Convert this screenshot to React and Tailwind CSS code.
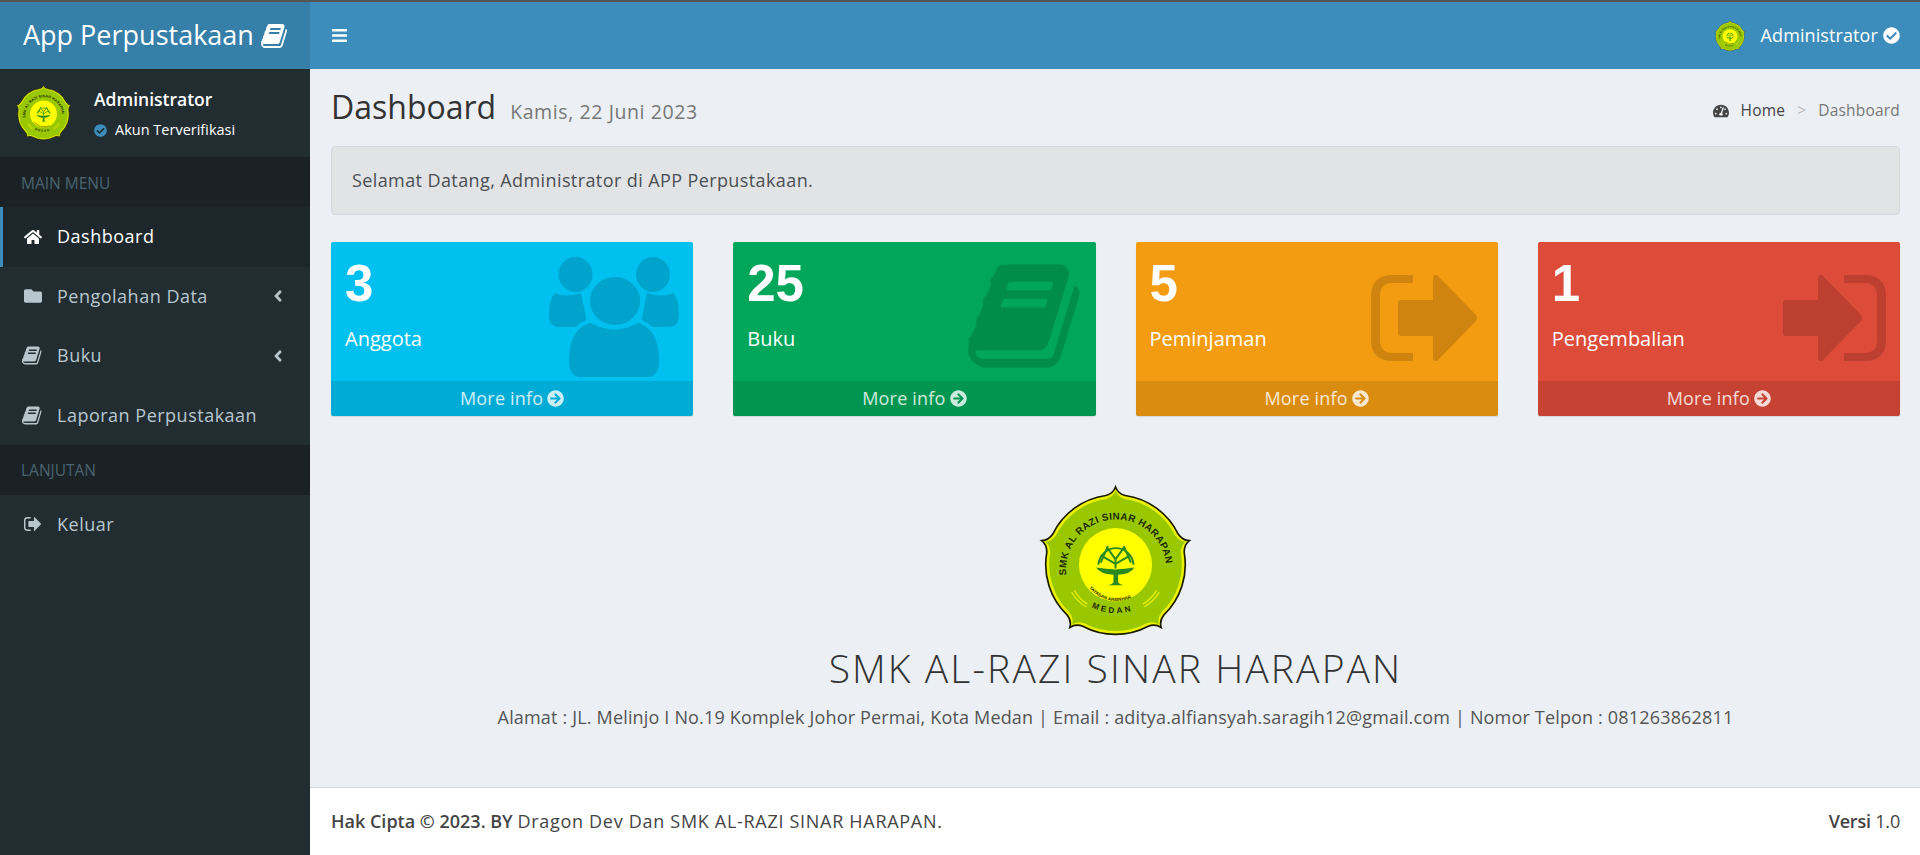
import { FaBars, FaHome, FaFolder, FaAngleLeft, FaCheckCircle, FaArrowCircleRight, FaTachometerAlt } from 'react-icons/fa';

const bookPath = "M1639 478q40 57 18 129l-275 906q-19 64-76.5 107.5t-122.5 43.5h-923q-77 0-148.5-53.5t-99.5-131.5q-24-67-2-127 0-4 3-27t4-37q1-8-3-21.5t-3-19.5q2-11 8-21t16.5-23.5 16.5-23.5q23-38 45-91.5t30-91.5q3-10 .5-30t-.5-28q3-11 17-28t17-23q21-36 42-92t25-90q1-9-2.5-32t.5-28q4-13 22-30.5t22-22.5q19-26 42.5-84.5t27.5-96.5q1-8-3-25.5t-2-26.5q2-8 9-18t18-23 17-21q8-12 16.5-30.5t15-35 16-36 19.5-32 26.5-23.5 36-11.5 47.5 5.5l-1 3q38-9 51-9h761q74 0 114 56t18 130l-274 906q-36 119-71.5 153.5t-128.5 34.5h-869q-27 0-38 15-11 16-1 43 24 70 144 70h923q29 0 56-15.5t35-41.5l300-987q7-22 5-57 38 15 59 43zm-1064 2q-4 13 2 22.5t20 9.5h608q13 0 25.5-9.5t16.5-22.5l21-64q4-13-2-22.5t-20-9.5h-608q-13 0-25.5 9.5t-16.5 22.5zm-83 256q-4 13 2 22.5t20 9.5h608q13 0 25.5-9.5t16.5-22.5l21-64q4-13-2-22.5t-20-9.5h-608q-13 0-25.5 9.5t-16.5 22.5z";

function BookIcon({ className }) {
  return (
    <svg viewBox="0 0 1792 1792" className={className} fill="currentColor">
      <path d={bookPath} />
    </svg>
  );
}

function SignOutIcon({ className }) {
  return (
    <svg viewBox="0 0 106 86" className={className} fill="currentColor">
      <path d="M42 0v8H22Q9 8 9 21v44q0 13 13 13h20v8H22Q0 86 0 65V21Q0 0 22 0z" />
      <path d="M27 28q0-3 3-3h32V3q0-3 3-3 2 0 3 2l37 38q2 3 0 6L68 84q-1 2-3 2-3 0-3-3V61H30q-3 0-3-3z" />
    </svg>
  );
}

function SignInIcon({ className }) {
  return (
    <svg viewBox="0 0 103 86" className={className} fill="currentColor">
      <path d="M61 0v8h20q13 0 13 13v44q0 13-13 13H61v8h20q22 0 22-21V21Q103 0 81 0z" />
      <path d="M0 28q0-3 3-3h32V3q0-3 3-3 2 0 3 2l37 38q2 3 0 6L41 84q-1 2-3 2-3 0-3-3V61H3q-3 0-3-3z" />
    </svg>
  );
}

function UsersIcon({ className, solid, bg }) {
  return (
    <svg viewBox="0 0 130 122" className={className} fill={solid}>
      <ellipse cx="26.5" cy="17.5" rx="17" ry="17.5" />
      <ellipse cx="104" cy="17.5" rx="17" ry="17.5" />
      <path d="M6 36q10 5 26 0l6 30-6 4H10Q0 70 0 58q0-16 6-22z" />
      <path d="M124 36q-10 5-26 0l-6 30 6 4h22q10 0 10-12 0-16-6-22z" />
      <path d="M36 66q4-4 10 0 20 9 38 0 6-4 10 0 18 8 18 38 0 18-14 18H32q-14 0-14-18 0-30 18-38z" stroke={bg} strokeWidth="4" />
      <ellipse cx="66" cy="44" rx="27" ry="26" stroke={bg} strokeWidth="4" />
    </svg>
  );
}

// outline of the crest: five round lobes with a small cusp between them
function crestOutline() {
  const pt = (deg, r) => {
    const a = (deg * Math.PI) / 180;
    return `${(285 + r * Math.cos(a)).toFixed(1)} ${(268 + r * Math.sin(a)).toFixed(1)}`;
  };
  const R = 212;
  let d = '';
  [-90, -18, 54, 126, 198].forEach((a, i) => {
    d += i === 0 ? `M${pt(a - 8, R)}` : `A${R} ${R} 0 0 1 ${pt(a - 8, R)}`;
    d += `Q${pt(a - 2, R + 4)} ${pt(a, 236)}Q${pt(a + 2, R + 4)} ${pt(a + 8, R)}`;
  });
  return `${d}A${R} ${R} 0 0 1 ${pt(-98, R)}Z`;
}

const crestShape = crestOutline();

// School crest, redrawn by hand; the lettering stays real text on arcs
function Logo({ id, className }) {
  return (
    <svg viewBox="50 20 470 480" className={className}>
      <defs>
        <path id={`${id}-top`} d="M136 300A152 152 0 1 1 438 300" />
        <path id={`${id}-mid`} d="M205 338A105 105 0 0 0 368 342" />
        <path id={`${id}-low`} d="M212 398A170 170 0 0 0 362 398" />
      </defs>
      <path d={crestShape} fill="#e9f000" stroke="#1a1a00" strokeWidth="5" />
      <path d={crestShape} fill="#9ac800" transform="translate(285 268) scale(.95) translate(-285 -268)" />
      <circle cx="285" cy="268" r="111" fill="#ffff00" />
      <text fontFamily="'Liberation Sans', sans-serif" fontWeight="700" fontSize="30" fill="#1c2a00" letterSpacing="1.2">
        <textPath href={`#${id}-top`}>SMK AL RAZI SINAR HARAPAN</textPath>
      </text>
      <text fontFamily="'Liberation Sans', sans-serif" fontWeight="700" fontSize="14" fill="#2a2a00">
        <textPath href={`#${id}-mid`}>YAYASAN ARSINHAR</textPath>
      </text>
      <text fontFamily="'Liberation Sans', sans-serif" fontWeight="700" fontSize="25" fill="#1c2a00" letterSpacing="8">
        <textPath href={`#${id}-low`}>MEDAN</textPath>
      </text>
      <path d="M152 352Q170 382 196 396M160 346Q176 374 200 388M418 352Q400 380 372 396M410 346Q394 372 368 388" stroke="#e9f000" strokeWidth="4" fill="none" />
      <g fill="none" stroke="#2a8a22" strokeWidth="6">
        <path d="M233 268A54 58 0 0 1 340 268" />
        <path d="M285 280V252L258 214M285 252L312 214M240 240L285 266 330 240M262 212L240 262M310 212L332 262" />
      </g>
      <path d="M226 277Q285 288 342 277 332 297 293 299V322Q298 328 310 331H262Q274 328 279 322V299Q238 297 226 277Z" fill="#2a8a22" />
    </svg>
  );
}

const menu = [
  { label: 'Dashboard', icon: <FaHome className="w-[18px] h-[18px]" />, active: true },
  { label: 'Pengolahan Data', icon: <FaFolder className="w-[18px] h-[18px]" />, caret: true },
  { label: 'Buku', icon: <BookIcon className="w-[21px] h-[21px] -ml-[2px]" />, caret: true },
  { label: 'Laporan Perpustakaan', icon: <BookIcon className="w-[21px] h-[21px] -ml-[2px]" /> },
];

function MenuItem({ item }) {
  return (
    <div className={`h-[59.5px] flex items-center pl-[24px] pr-[23px] border-l-[3px] ${item.active ? 'bg-[#1e282c] border-[#3c8dbc] text-white' : 'border-transparent text-[#b8c7ce]'}`}>
      <span className="w-[33px] -ml-[3px] shrink-0">{item.icon}</span>
      <span className="text-[18px] tracking-[.5px] flex-1">{item.label}</span>
      {item.caret && <FaAngleLeft className="w-[18px] h-[18px]" />}
    </div>
  );
}

const cards = [
  { value: '3', label: 'Anggota', bg: 'bg-[#00c0ef]', icon: <UsersIcon solid="#00a3cb" bg="#00c0ef" className="absolute left-[218px] top-[15px] w-[130px] h-[122px]" /> },
  { value: '25', label: 'Buku', bg: 'bg-[#00a65a]', icon: <BookIcon className="absolute left-[235px] top-[14px] w-[120px] h-[120px] text-black/15" /> },
  { value: '5', label: 'Peminjaman', bg: 'bg-[#f39c12]', icon: <SignOutIcon className="absolute left-[235px] top-[33px] w-[106px] h-[86px] text-black/15" /> },
  { value: '1', label: 'Pengembalian', bg: 'bg-[#dd4b39]', icon: <SignInIcon className="absolute left-[245px] top-[33px] w-[103px] h-[86px] text-black/15" /> },
];

function StatCard({ card }) {
  return (
    <div className={`relative h-[174px] rounded-[2px] overflow-hidden shadow-[0_1px_1px_rgba(0,0,0,0.1)] text-white flex flex-col ${card.bg}`}>
      {card.icon}
      <div className="flex-1 px-[14px] pt-[11px]">
        <div className="font-['Liberation_Sans',sans-serif] font-bold text-[51px] leading-[62px]">{card.value}</div>
        <div className="text-[20px] leading-[28px] mt-[10px]">{card.label}</div>
      </div>
      <div className="relative h-[35px] bg-black/10 text-white/80 text-[18px] tracking-[.2px] flex items-center justify-center gap-[4px]">
        More info <FaArrowCircleRight className="w-[17px] h-[17px]" />
      </div>
    </div>
  );
}

export default function App() {
  return (
    <div className="h-[855px] flex flex-col overflow-hidden bg-[#ecf0f5] font-['Open_Sans',sans-serif] text-[#333]">
      <div className="h-[2px] bg-[#555]" />

      {/* Header */}
      <header className="h-[67px] flex shrink-0">
        <div className="w-[310px] bg-[#367fa9] text-white flex items-center pl-[23px] gap-[7px] text-[27px] font-medium">
          App Perpustakaan <BookIcon className="w-[28px] h-[28px]" />
        </div>
        <div className="flex-1 bg-[#3c8dbc] text-white flex items-center justify-between pl-[21px] pr-[20px]">
          <FaBars className="w-[17px] h-[17px]" />
          <div className="flex items-center">
            <Logo id="nav" className="w-[32px] h-[32px]" />
            <span className="ml-[15px] text-[18px] tracking-[.1px]">Administrator</span>
            <FaCheckCircle className="ml-[5px] w-[17px] h-[17px]" />
          </div>
        </div>
      </header>

      <div className="flex-1 flex min-h-0">
        {/* Sidebar */}
        <aside className="w-[310px] shrink-0 bg-[#222d32]">
          <div className="h-[88px] flex items-center pl-[15px]">
            <Logo id="side" className="w-[57px] h-[58px]" />
            <div className="ml-[22px] text-white">
              <div className="text-[17.5px] font-semibold leading-[24px]">Administrator</div>
              <div className="flex items-center text-[14.5px] mt-[10px] leading-[18px]">
                <FaCheckCircle className="w-[13px] h-[13px] text-[#3c8dbc] mr-[8px]" />
                Akun Terverifikasi
              </div>
            </div>
          </div>
          <div className="h-[50px] bg-[#1a2226] text-[#4b646f] text-[15.5px] flex items-center pl-[21px] pt-[3px]">MAIN MENU</div>
          {menu.map((item) => (
            <MenuItem key={item.label} item={item} />
          ))}
          <div className="h-[50px] bg-[#1a2226] text-[#4b646f] text-[15.5px] flex items-center pl-[21px] pt-[1px]">LANJUTAN</div>
          <div className="h-[58px] flex items-center pl-[24px] text-[#b8c7ce]">
            <span className="w-[33px] shrink-0"><SignOutIcon className="w-[17px] h-[14px]" /></span>
            <span className="text-[18px] tracking-[.5px]">Keluar</span>
          </div>
        </aside>

        {/* Main */}
        <div className="flex-1 flex flex-col min-w-0">
          <main className="flex-1 pl-[21px] pr-[20px] min-h-0">
            <div className="h-[77px] flex items-center justify-between">
              <div className="flex items-baseline mt-[2px]">
                <h1 className="text-[32px] font-medium leading-none">Dashboard</h1>
                <span className="ml-[14px] text-[19.5px] tracking-[.6px] text-[#777]">Kamis, 22 Juni 2023</span>
              </div>
              <div className="flex items-center text-[15.5px] tracking-[.2px] text-[#444] mt-[6px]">
                <FaTachometerAlt className="w-[16px] h-[16px] mr-[12px]" />
                Home
                <span className="mx-[12px] text-[#bbb]">&gt;</span>
                <span className="text-[#777]">Dashboard</span>
              </div>
            </div>
            <div className="h-[69px] bg-[#e2e3e5] border border-[#d6d8db] rounded-[4px] flex items-center px-[20px] text-[18px] tracking-[.4px] text-[#4a4f54]">
              Selamat Datang, Administrator di APP Perpustakaan.
            </div>
            <div className="grid grid-cols-4 gap-[40px] mt-[27px]">
              {cards.map((card) => (
                <StatCard key={card.label} card={card} />
              ))}
            </div>
            <div className="flex flex-col items-center mt-[67px]">
              <Logo id="main" className="w-[155px] h-[158px]" />
              <h2 className="text-[39px] leading-[48px] tracking-[2.1px] font-light text-[#333] mt-[3px]">SMK AL-RAZI SINAR HARAPAN</h2>
              <p className="text-[18px] tracking-[.17px] text-[#555] mt-[12px]">
                Alamat : JL. Melinjo I No.19 Komplek Johor Permai, Kota Medan | Email : aditya.alfiansyah.saragih12@gmail.com | Nomor Telpon : 081263862811
              </p>
            </div>
          </main>
          <footer className="h-[68px] shrink-0 bg-white border-t border-[#d2d6de] flex items-center justify-between pl-[21px] pr-[20px] text-[18px] text-[#444]">
            <div><b className="font-semibold">Hak Cipta © 2023. BY</b> <span className="tracking-[.7px]">Dragon Dev Dan SMK AL-RAZI SINAR HARAPAN.</span></div>
            <div className="tracking-[-.2px]"><b className="font-semibold">Versi</b> 1.0</div>
          </footer>
        </div>
      </div>
    </div>
  );
}
